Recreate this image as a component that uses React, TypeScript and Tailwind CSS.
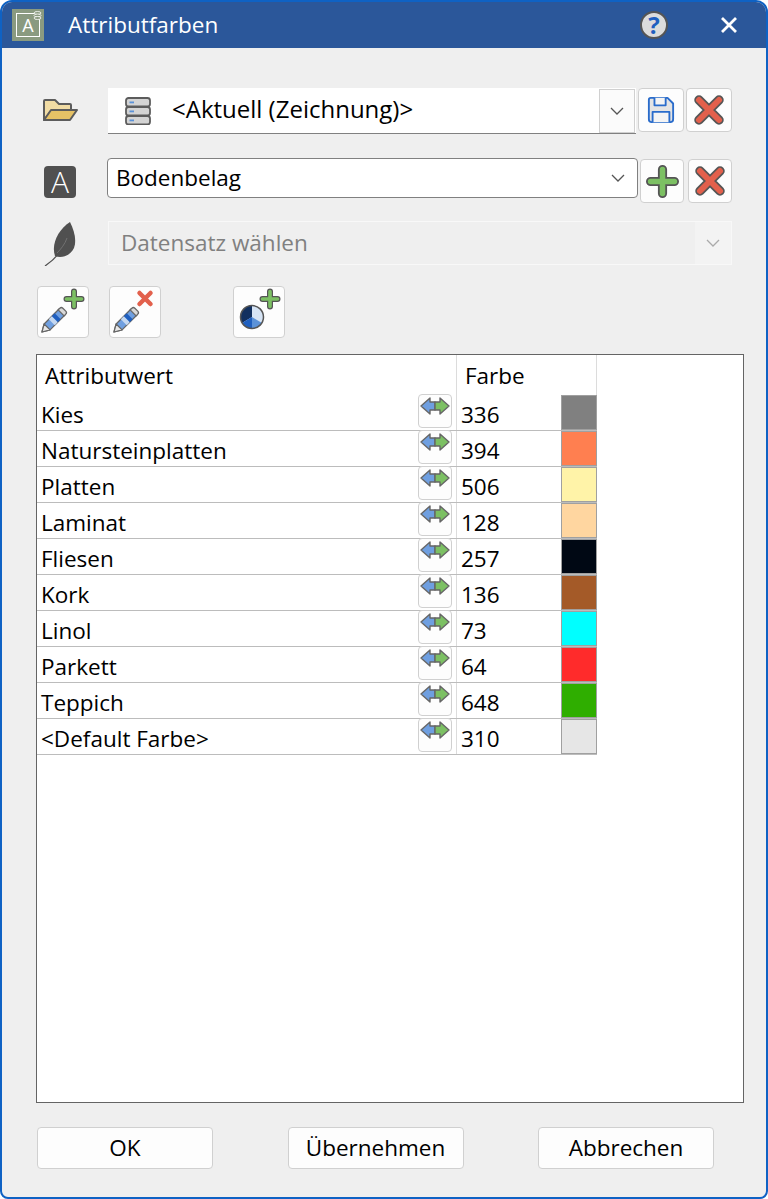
import type { ReactNode } from "react";

const zeilen = [
  { name: "Kies", wert: "336", farbe: "bg-[#808080]" },
  { name: "Natursteinplatten", wert: "394", farbe: "bg-[#ff7f50]" },
  { name: "Platten", wert: "506", farbe: "bg-[#fff3a8]" },
  { name: "Laminat", wert: "128", farbe: "bg-[#ffd6a0]" },
  { name: "Fliesen", wert: "257", farbe: "bg-[#000814]" },
  { name: "Kork", wert: "136", farbe: "bg-[#a45a28]" },
  { name: "Linol", wert: "73", farbe: "bg-[#00ffff]" },
  { name: "Parkett", wert: "64", farbe: "bg-[#ff2b2b]" },
  { name: "Teppich", wert: "648", farbe: "bg-[#2fae00]" },
  { name: "<Default Farbe>", wert: "310", farbe: "bg-[#e6e6e6]" },
];

function PlusIcon({ size = 33 }: { size?: number }) {
  return (
    <svg width={size} height={size} viewBox="0 0 36 36" fill="none" strokeLinecap="round">
      <path d="M18 5v26M5 18h26" stroke="#555" strokeWidth="10" />
      <path d="M18 5v26M5 18h26" stroke="#7cc063" strokeWidth="6" />
    </svg>
  );
}

function KreuzIcon({ size = 32 }: { size?: number }) {
  return (
    <svg width={size} height={size} viewBox="0 0 32 32" fill="none" strokeLinecap="round">
      <path d="M6 6l20 20M26 6L6 26" stroke="#555" strokeWidth="9.5" />
      <path d="M6 6l20 20M26 6L6 26" stroke="#e2604c" strokeWidth="6" />
    </svg>
  );
}

function Stift() {
  return (
    <g transform="translate(-0.4 11.7) scale(0.85)">
      <path d="M4 38l2.5-9.5L24 11l7 7-17.5 17.5z" fill="#6f9fe0" stroke="#666" strokeWidth="1.5" strokeLinejoin="round" />
      <path d="M6.5 28.5l7 7L4 38z" fill="#e8e8e8" stroke="#666" strokeWidth="1.5" strokeLinejoin="round" />
      <path d="M15.500 19.500l7 7 3.500-3.500-7-7z" fill="#1f5fbf" />
      <path d="M12 23l7 7 3.500-3.500-7-7z" fill="#c4d7f0" />
      <path d="M23 12l7 7 2-2a2.500 2.500 0 0 0 0-3.500L28.500 10a2.500 2.500 0 0 0-3.500 0z" fill="#d8d8d8" stroke="#666" strokeWidth="1.500" />
    </g>
  );
}

function StiftPlus() {
  return (
    <svg width="48" height="48" viewBox="0 0 48 48" fill="none" strokeLinecap="round">
      <Stift />
      <path d="M35 3.500v15M27.500 11h15" stroke="#555" strokeWidth="6" />
      <path d="M35 3.500v15M27.500 11h15" stroke="#7cc063" strokeWidth="3.600" />
    </svg>
  );
}

function StiftKreuz() {
  return (
    <svg width="48" height="48" viewBox="0 0 48 48" fill="none" strokeLinecap="round">
      <Stift />
      <path d="M28.500 5l11 11M39.500 5l-11 11" stroke="#e2604c" strokeWidth="4.500" />
    </svg>
  );
}

function KreisPlus() {
  return (
    <svg width="48" height="48" viewBox="0 0 48 48" fill="none" strokeLinecap="round">
      <circle cx="17" cy="29" r="11.500" fill="#d6e4f5" />
      <path d="M17 29V17.500A11.500 11.500 0 0 0 7 35z" fill="#12305f" />
      <path d="M17 29L7 35a11.500 11.500 0 0 0 10 5.500z" fill="#1f5fbf" />
      <path d="M17 29v11.500A11.500 11.500 0 0 0 27 35z" fill="#5b92d8" />
      <circle cx="17" cy="29" r="11.500" stroke="#555" strokeWidth="1.500" />
      <path d="M35 3.500v15M27.500 11h15" stroke="#555" strokeWidth="6" />
      <path d="M35 3.500v15M27.500 11h15" stroke="#7cc063" strokeWidth="3.600" />
    </svg>
  );
}

function Pfeile() {
  return (
    <svg width="30" height="18" viewBox="0 0 30 18" strokeLinejoin="round">
      <path d="M1 9l9-8v4h5v8h-5v4z" fill="#6f9fe0" stroke="#666" strokeWidth="1.400" />
      <path d="M29 9l-9-8v4h-5v8h5v4z" fill="#7cc063" stroke="#666" strokeWidth="1.400" />
    </svg>
  );
}

function Ordner() {
  return (
    <svg width="36" height="24" viewBox="0 0 36 24" strokeLinejoin="round">
      <path d="M2 22V3q0-1 1-1h10l4 4h11q1 0 1 1v5H10L2 22z" fill="#f1dca4" stroke="#5c5c5c" strokeWidth="2" />
      <path d="M2 22l7-10h26l-7 10z" fill="#e6c266" stroke="#5c5c5c" strokeWidth="2" />
    </svg>
  );
}

function Speicher() {
  return (
    <svg width="28" height="28" viewBox="0 0 28 28">
      {[1, 10, 19].map((y) => (
        <g key={y}>
          <rect x="2" y={y} width="24" height="8.500" rx="2.500" fill="#d4d4d4" stroke="#5c5c5c" strokeWidth="1.800" />
          <rect x="5.500" y={y + 3.500} width="4.500" height="1.800" fill="#5b92d8" />
        </g>
      ))}
    </svg>
  );
}

function Diskette() {
  return (
    <svg width="28" height="28" viewBox="0 0 30 30" fill="#e4e4e4" stroke="#2a6ccb" strokeWidth="2" strokeLinejoin="round">
      <path d="M4 2h18l6 6v17q0 3-3 3H5q-3 0-3-3V4q0-2 2-2z" />
      <path d="M8 2v8h12V2M6 28V17h18v11" fill="#f4f4f4" />
    </svg>
  );
}

function Blatt() {
  return (
    <svg width="36" height="46" viewBox="0 0 36 46" fill="#505050">
      <path d="M26 2c4 8 7 18 4 26-3 7-12 11-19 8C7 24 14 10 26 2z" />
      <path d="M1 46c9-6 17-14 21-26" fill="none" stroke="#505050" strokeWidth="1.200" />
      <path d="M13 33c4-4 8-9 10-15" fill="none" stroke="#7a7a7a" strokeWidth="0.800" />
    </svg>
  );
}

function Pfeil({ stroke = "#555" }: { stroke?: string }) {
  return (
    <svg width="14" height="8" viewBox="0 0 14 8" fill="none" stroke={stroke} strokeWidth="1.300">
      <path d="M1 1l6 6 6-6" />
    </svg>
  );
}

function Knopf({ children, className }: { children: ReactNode; className: string }) {
  return (
    <button
      type="button"
      className={`flex shrink-0 items-center justify-center rounded border border-[#d0d0d0] bg-[#fdfdfd] ${className}`}
    >
      {children}
    </button>
  );
}

export default function App() {
  return (
    <div
      className="flex h-screen flex-col overflow-hidden rounded-t-xl rounded-b-lg border-2 border-[#0f62c4] bg-[#efefef] text-[22.5px] text-black"
      style={{ fontFamily: '"Open Sans", "Liberation Sans", sans-serif' }}
    >
      {/* Titelleiste */}
      <div className="flex h-[46px] shrink-0 items-center bg-[#2b579a] pr-7 pl-2.5 text-white">
        <div className="relative flex size-8 items-center justify-center bg-[#8a9a80] text-lg">
          <div className="flex size-6 items-center justify-center border border-white">A</div>
          <svg className="absolute top-0.5 right-0.5" width="9" height="9" viewBox="0 0 9 9" fill="#8a9a80" stroke="white" strokeWidth="0.800">
            <ellipse cx="4.500" cy="2" rx="3.500" ry="1.500" />
            <ellipse cx="4.500" cy="4.500" rx="3.500" ry="1.500" />
            <ellipse cx="4.500" cy="7" rx="3.500" ry="1.500" />
          </svg>
        </div>
        <span className="ml-6 flex-1">Attributfarben</span>
        <div className="mr-13 flex size-7 items-center justify-center rounded-full border-2 border-[#555] bg-[#dcdcdc] text-2xl leading-none font-bold text-[#1f5fbf]">
          ?
        </div>
        <svg width="18" height="18" viewBox="0 0 18 18" stroke="white" strokeWidth="2.800">
          <path d="M2 2l14 14M16 2L2 16" />
        </svg>
      </div>

      <div className="flex min-h-0 flex-1 flex-col pt-10 pr-5.5 pb-7 pl-8.5">
        {/* Vorlage */}
        <div className="mb-6 flex h-11.5 items-start pr-3 pl-2">
          <div className="-ml-0.5 flex h-11 w-16.5 items-center">
            <Ordner />
          </div>
          <div className="flex h-full flex-1 items-start border-b border-[#808080] bg-white pt-px pr-px pl-4">
            <div className="flex h-11 flex-1 items-center">
              <Speicher />
              <span className="ml-5 flex-1 pb-1 text-2xl">&lt;Aktuell (Zeichnung)&gt;</span>
            </div>
            <div className="flex h-11 w-9 items-center justify-center border border-[#d0d0d0] bg-[#fbfbfb]">
              <Pfeil />
            </div>
          </div>
          <div className="ml-0.5 flex gap-0.5">
            <Knopf className="h-11 w-11.5"><Diskette /></Knopf>
            <Knopf className="h-11 w-11.5"><KreuzIcon /></Knopf>
          </div>
        </div>

        {/* Attribut */}
        <div className="mb-4 flex items-start pr-3 pb-0.5 pl-2">
          <div className="flex h-10 w-16 items-end">
            <div className="flex size-8 items-center justify-center rounded-sm bg-[#505050] text-3xl font-light text-white">A</div>
          </div>
          <div className="-ml-px flex h-10 flex-1 items-center rounded-sm border border-[#808080] bg-white pr-3 pl-2">
            <span className="flex-1">Bodenbelag</span>
            <Pfeil />
          </div>
          <div className="mt-px ml-0.5 flex gap-1">
            <Knopf className="size-11"><PlusIcon /></Knopf>
            <Knopf className="size-11"><KreuzIcon /></Knopf>
          </div>
        </div>

        {/* Datensatz */}
        <div className="mb-5 flex items-center pr-3 pb-px pl-2">
          <div className="flex h-11 w-16 items-center">
            <Blatt />
          </div>
          <div className="flex h-11 flex-1 items-center border border-[#f8f8f8] pl-3 text-[#808080]">
            <span className="flex-1">Datensatz wählen</span>
            <div className="flex h-full w-9 items-center justify-center bg-[#f3f3f3]">
              <Pfeil stroke="#aaaaaa" />
            </div>
          </div>
        </div>

        {/* Werkzeuge */}
        <div className="mb-4 flex pl-px">
          <Knopf className="size-13"><StiftPlus /></Knopf>
          <Knopf className="ml-5 size-13"><StiftKreuz /></Knopf>
          <Knopf className="ml-18 size-13"><KreisPlus /></Knopf>
        </div>

        {/* Tabelle */}
        <div className="mb-6 min-h-0 flex-1 border border-[#646464] bg-white">
          <div className="w-140">
            <div className="flex h-10 items-center">
              <div className="flex h-full w-105 items-center border-r border-[#dcdcdc] pt-0.5 pl-2">Attributwert</div>
              <div className="flex h-full flex-1 items-center border-r border-[#dcdcdc] pt-0.5 pl-2">Farbe</div>
            </div>
            {zeilen.map((z) => (
              <div key={z.name} className="flex h-9 border-b border-[#bcbcbc]">
                <div className="flex w-105 items-center justify-between border-r border-[#dcdcdc] pr-1 pl-1">
                  <span className="pt-1">{z.name}</span>
                  <Knopf className="mb-0.5 size-8.5 items-start self-end pt-0.5"><Pfeile /></Knopf>
                </div>
                <div className="flex flex-1 items-center pt-1 pl-1">{z.wert}</div>
                <div className={`w-9 border border-[#a0a0a0] ${z.farbe}`} />
              </div>
            ))}
          </div>
        </div>

        {/* Schaltflächen */}
        <div className="flex justify-between pr-7.5 pl-px">
          <Knopf className="h-10.5 w-44">OK</Knopf>
          <Knopf className="h-10.5 w-44">Übernehmen</Knopf>
          <Knopf className="h-10.5 w-44">Abbrechen</Knopf>
        </div>
      </div>
    </div>
  );
}
